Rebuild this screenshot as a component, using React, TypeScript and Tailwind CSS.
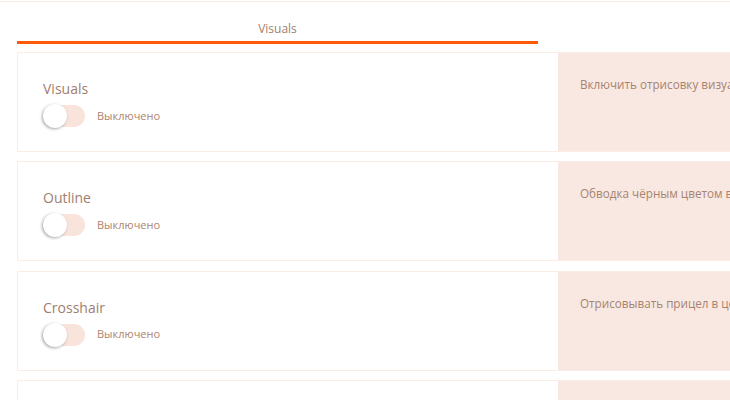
const settings = [
  { name: 'Visuals', desc: 'Включить отрисовку визуалов' },
  { name: 'Outline', desc: 'Обводка чёрным цветом всех элементов' },
  { name: 'Crosshair', desc: 'Отрисовывать прицел в центре экрана' },
  { name: 'Watermark', desc: 'Показывать водяной знак' },
];

function Toggle() {
  return (
    <div className="relative w-[42px] h-[22px] rounded-full bg-[#f9e4dc]">
      <div className="absolute left-0 top-[-1px] w-[24px] h-[24px] rounded-full bg-white shadow-[-1px_1px_3px_rgba(0,0,0,0.35)]" />
    </div>
  );
}

function SettingCard({ name, desc }: { name: string; desc: string }) {
  return (
    <div className="flex h-[100px] mb-[9.3px] border border-[#fcece6]">
      <div className="w-[540px] shrink-0 bg-white pl-[25px] pt-[26px]">
        <p className="text-[14px] leading-[20px] text-[#a07e6f]">{name}</p>
        <div className="flex items-center gap-[12px] mt-[6px]">
          <Toggle />
          <span className="text-[11px] text-[#ad8470]">Выключено</span>
        </div>
      </div>
      <div className="w-[500px] shrink-0 bg-[#f9e8e2] pl-[22px] pt-[22px]">
        <p className="text-[11.7px] leading-[18px] text-[#a6836f] whitespace-nowrap">{desc}</p>
      </div>
    </div>
  );
}

export default function App() {
  return (
    <div
      className="w-[730px] h-[400px] overflow-hidden bg-white"
      style={{ fontFamily: '"Open Sans", "Noto Sans", sans-serif' }}
    >
      <div className="mt-[1px] border-t border-[#fbeee9]" />
      <div className="w-[1100px] pl-[17px]">
        <div className="flex w-[1042px]">
          <div className="w-[521px] pt-[18px]">
            <p className="text-center text-[12px] leading-[18px] text-[#a08070]">Visuals</p>
            <div className="mt-[3px] h-[3px] bg-[#ff5a0a]" />
          </div>
        </div>
        <div className="mt-[8px]">
          {settings.map((s) => (
            <SettingCard key={s.name} name={s.name} desc={s.desc} />
          ))}
        </div>
      </div>
    </div>
  );
}
